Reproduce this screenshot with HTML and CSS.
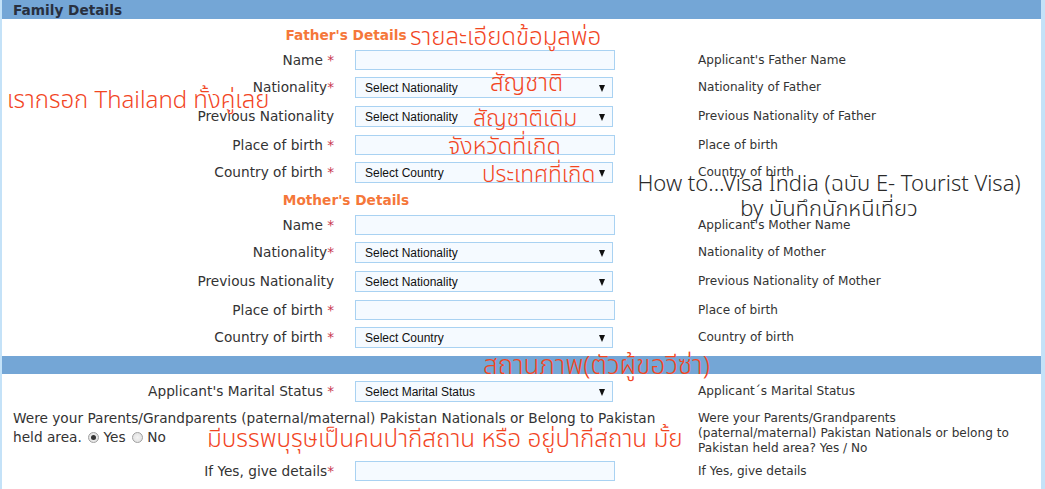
FILE: index.html
```html
<!DOCTYPE html>
<html>
<head>
<meta charset="utf-8">
<title>Family Details</title>
<link rel="stylesheet" href="styles.css">
</head>
<body>
<div class="page">
  <div class="bar">Family Details</div>
  <div class="form">
    <div class="section-title">Father's Details</div>

    <div class="row r-in"><div class="label">Name <span class="req">*</span></div><div class="ctl"><input class="text" type="text"></div><div class="help">Applicant's Father Name</div></div>
    <div class="row r-sel"><div class="label">Nationality<span class="req">*</span></div><div class="ctl"><span class="sel"><select><option>Select Nationality</option></select></span></div><div class="help">Nationality of Father</div></div>
    <div class="row r-sel"><div class="label">Previous Nationality</div><div class="ctl"><span class="sel"><select><option>Select Nationality</option></select></span></div><div class="help">Previous Nationality of Father</div></div>
    <div class="row r-in"><div class="label">Place of birth <span class="req">*</span></div><div class="ctl"><input class="text" type="text"></div><div class="help">Place of birth</div></div>
    <div class="row r-sel"><div class="label">Country of birth <span class="req">*</span></div><div class="ctl"><span class="sel"><select><option>Select Country</option></select></span></div><div class="help">Country of birth</div></div>

    <div class="section-title">Mother's Details</div>

    <div class="row r-in"><div class="label">Name <span class="req">*</span></div><div class="ctl"><input class="text" type="text"></div><div class="help">Applicant's Mother Name</div></div>
    <div class="row r-sel"><div class="label">Nationality<span class="req">*</span></div><div class="ctl"><span class="sel"><select><option>Select Nationality</option></select></span></div><div class="help">Nationality of Mother</div></div>
    <div class="row r-sel"><div class="label">Previous Nationality</div><div class="ctl"><span class="sel"><select><option>Select Nationality</option></select></span></div><div class="help">Previous Nationality of Mother</div></div>
    <div class="row r-in"><div class="label">Place of birth <span class="req">*</span></div><div class="ctl"><input class="text" type="text"></div><div class="help">Place of birth</div></div>
    <div class="row r-sel last"><div class="label">Country of birth <span class="req">*</span></div><div class="ctl"><span class="sel"><select><option>Select Country</option></select></span></div><div class="help">Country of birth</div></div>
  </div>

  <div class="bar bar-empty"></div>

  <div class="form form2">
    <div class="row r-sel"><div class="label">Applicant's Marital Status <span class="req">*</span></div><div class="ctl"><span class="sel"><select><option>Select Marital Status</option></select></span></div><div class="help">Applicant´s Marital Status</div></div>
    <div class="row r-q">
      <div class="question">Were your Parents/Grandparents (paternal/maternal) Pakistan Nationals or Belong to Pakistan held area. <span class="radio on"></span> Yes <span class="radio"></span> No</div>
      <div class="help help-q">Were your Parents/Grandparents<br>(paternal/maternal) Pakistan Nationals or belong to<br>Pakistan held area? Yes / No</div>
    </div>
    <div class="row r-in"><div class="label">If Yes, give details<span class="req">*</span></div><div class="ctl"><input class="text" type="text"></div><div class="help">If Yes, give details</div></div>
  </div>

  <div class="note n1">รายละเอียดข้อมูลพ่อ</div>
  <div class="note n2">เรากรอก Thailand ทั้งคู่เลย</div>
  <div class="note n3">สัญชาติ</div>
  <div class="note n4">สัญชาติเดิม</div>
  <div class="note n5">จังหวัดที่เกิด</div>
  <div class="note n6">ประเทศที่เกิด</div>
  <div class="note credit c1">How to...Visa India (ฉบับ E- Tourist Visa)</div>
  <div class="note credit c2">by บันทึกนักหนีเที่ยว</div>
  <div class="note n7">สถานภาพ(ตัวผู้ขอวีซ่า)</div>
  <div class="note n8">มีบรรพบุรุษเป็นคนปากีสถาน หรือ อยู่ปากีสถาน มั้ย</div>
</div>
</body>
</html>
```

FILE: styles.css
```css
html, body {
  margin: 0;
  padding: 0;
}
body {
  background: #c4e2f8;
  font-family: "DejaVu Sans", Verdana, sans-serif;
  color: #333;
  width: 1045px;
  height: 489px;
  overflow: hidden;
}
.page {
  position: relative;
  margin-left: 2px;
  width: 1039px;
  height: 489px;
  background: #fff;
}
.bar {
  background: #74a6d6;
  height: 19px;
  padding-top: 1px;
  box-sizing: border-box;
  line-height: 18px;
  font-size: 13.7px;
  font-weight: bold;
  color: #28303f;
  padding-left: 11px;
}
.bar-empty {
  height: 18px;
  padding: 0;
}
.form {
  padding-top: 7px;
}
.form2 {
  padding-top: 7px;
}
.section-title {
  height: 24px;
  line-height: 18px;
  width: 688px;
  text-align: center;
  font-size: 13.7px;
  font-weight: bold;
  color: #f5773a;
}
.row {
  display: grid;
  grid-template-columns: 343px 345px 1fr;
  align-items: start;
}
.r-in { height: 27px; }
.r-sel { height: 29px; }
.r-in .label, .r-in .help { line-height: 20px; }
.r-sel .label, .r-sel .help { line-height: 21px; }
.label {
  text-align: right;
  padding-right: 11px;
  font-size: 13.7px;
  color: #333;
  white-space: nowrap;
}
.req { color: #c8344e; }
.ctl { padding-left: 10px; }
.help {
  padding-left: 8px;
  font-size: 12.1px;
  color: #333;
}
input.text {
  display: block;
  box-sizing: border-box;
  width: 260px;
  height: 20px;
  margin: 0;
  border: 1px solid #a9d2f2;
  background: #f5faff;
  outline: none;
}
.sel {
  position: relative;
  display: block;
  width: 258px;
  height: 21px;
}
.sel select {
  appearance: none;
  -webkit-appearance: none;
  display: block;
  box-sizing: border-box;
  width: 258px;
  height: 21px;
  margin: 0;
  border: 1px solid #a9d2f2;
  border-radius: 0;
  background: #f5faff;
  padding: 0 0 0 9px;
  font-family: "Liberation Sans", Arial, sans-serif;
  font-size: 12px;
  color: #111;
}
.sel::after {
  content: "";
  position: absolute;
  right: 8px;
  top: 8px;
  border-left: 3.5px solid transparent;
  border-right: 3.5px solid transparent;
  border-top: 7px solid #111;
}
.r-q {
  height: 51px;
}
.question {
  grid-column: 1 / 3;
  padding: 0 8px 0 11px;
  font-size: 13.7px;
  line-height: 19px;
  margin-top: -1px;
  color: #333;
}
.help-q {
  grid-column: 3;
  line-height: 15px;
  padding-right: 10px;
  margin-top: 1px;
  white-space: nowrap;
}
.radio {
  display: inline-block;
  width: 11px;
  height: 11px;
  box-sizing: border-box;
  border: 1px solid #a0a0a0;
  border-radius: 50%;
  background: radial-gradient(circle, #f4f4f4 0%, #dcdcdc 100%);
  vertical-align: -1px;
  position: relative;
  margin-left: 2px;
}
.radio.on::after {
  content: "";
  position: absolute;
  left: 2px;
  top: 2px;
  width: 5px;
  height: 5px;
  border-radius: 50%;
  background: #333;
}
.note {
  position: absolute;
  white-space: nowrap;
  font-family: "Noto Sans Thai", "Noto Sans Thai Looped", "Loma", "Garuda", "Noto Sans", sans-serif;
  font-weight: 300;
  font-size: 24px;
  line-height: 28px;
  color: #f2461f;
}
.credit {
  color: #2a2a2a;
  font-size: 22px;
  line-height: 26px;
  text-align: center;
  width: 440px;
}
.n1 { left: 408px; top: 24px; }
.n2 { left: 5px; top: 87px; }
.n3 { left: 488px; top: 70px; }
.n4 { left: 471px; top: 105px; font-size: 23px; }
.n5 { left: 446px; top: 133px; font-size: 23.4px; }
.n6 { left: 480px; top: 161px; font-size: 22.6px; }
.c1 { left: 607px; top: 172px; }
.c2 { left: 607px; top: 197px; }
.n7 { left: 481px; top: 352px; font-size: 26px; line-height: 28px; }
.n8 { left: 205px; top: 426px; font-size: 24.3px; }
```
